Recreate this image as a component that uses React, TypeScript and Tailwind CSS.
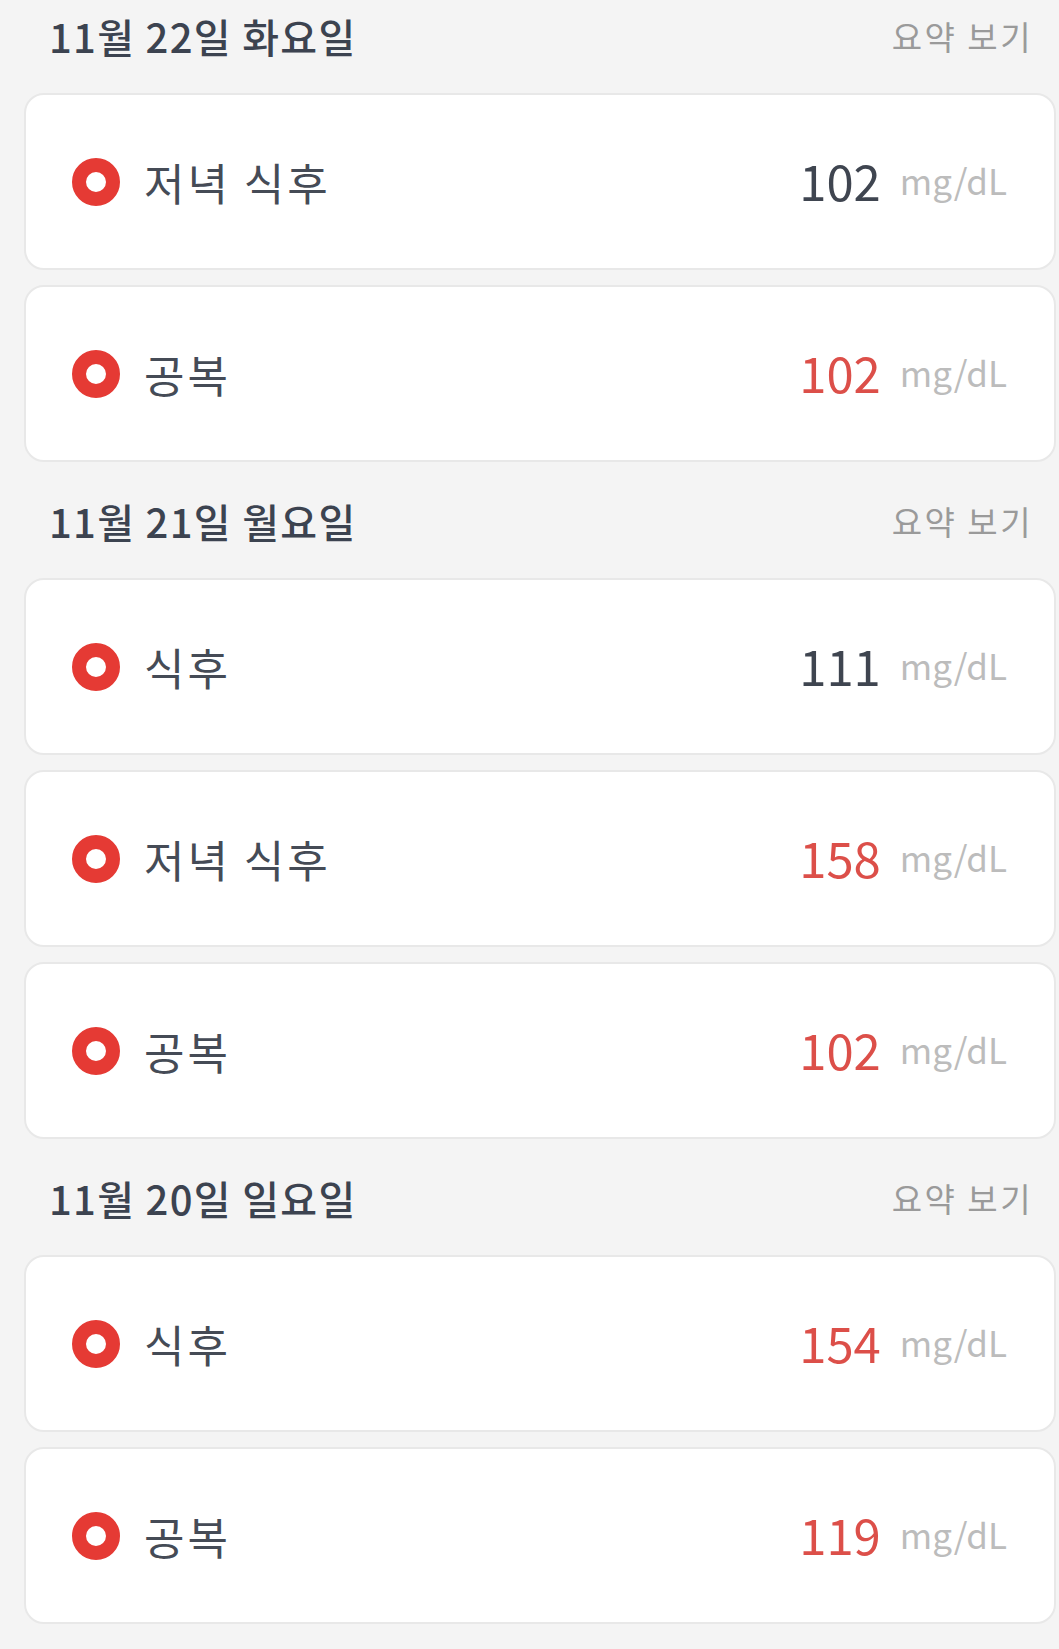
const FONT = "font-['Noto_Sans_CJK_KR','Noto_Sans',sans-serif]";

interface Reading {
  label: string;
  value: number;
  high: boolean;
}

interface Day {
  date: string;
  readings: Reading[];
}

const days: Day[] = [
  {
    date: "11월 22일 화요일",
    readings: [
      { label: "저녁 식후", value: 102, high: false },
      { label: "공복", value: 102, high: true },
    ],
  },
  {
    date: "11월 21일 월요일",
    readings: [
      { label: "식후", value: 111, high: false },
      { label: "저녁 식후", value: 158, high: true },
      { label: "공복", value: 102, high: true },
    ],
  },
  {
    date: "11월 20일 일요일",
    readings: [
      { label: "식후", value: 154, high: true },
      { label: "공복", value: 119, high: true },
    ],
  },
];

const ReadingCard = ({ reading }: { reading: Reading }) => (
  <div className="flex h-[177px] items-center justify-between rounded-[20px] border-2 border-[#e8e8e8] bg-white pl-[46px] pr-[47px]">
    <div className="flex items-center gap-[24px]">
      <span className="box-border h-[48px] w-[48px] rounded-full border-[14px] border-[#e53a34] bg-white" />
      <span className="text-[44px] leading-none tracking-[3px] text-[#454b56]">
        {reading.label}
      </span>
    </div>
    <div className="-mt-[4px] flex items-center gap-[19px]">
      <span
        className={
          reading.high
            ? "text-[49px] leading-none text-[#dc4f49]"
            : "text-[49px] leading-none text-[#3f4550]"
        }
      >
        {reading.value}
      </span>
      <span className="text-[35px] leading-none text-[#bcbcbc]">mg/dL</span>
    </div>
  </div>
);

export default function App() {
  return (
    <div className={`${FONT} min-h-[1649px] bg-[#f4f4f4] pl-[24px] pr-[3px] pb-[25px]`}>
      {days.map((day, i) => (
        <section key={day.date} className={i === 0 ? "" : "mt-[23px]"}>
          <div className="flex h-[78px] items-center justify-between pb-[6px] pl-[25px] pr-[23px]">
            <h2 className="text-[40px] font-medium leading-none tracking-[1.3px] text-[#3c4350]">
              {day.date}
            </h2>
            <button type="button" className="text-[33px] leading-none tracking-[2.5px] text-[#9a9a9a]">
              요약 보기
            </button>
          </div>
          <div className="mt-[15px] flex flex-col gap-[15px]">
            {day.readings.map((r, j) => (
              <ReadingCard key={j} reading={r} />
            ))}
          </div>
        </section>
      ))}
    </div>
  );
}
